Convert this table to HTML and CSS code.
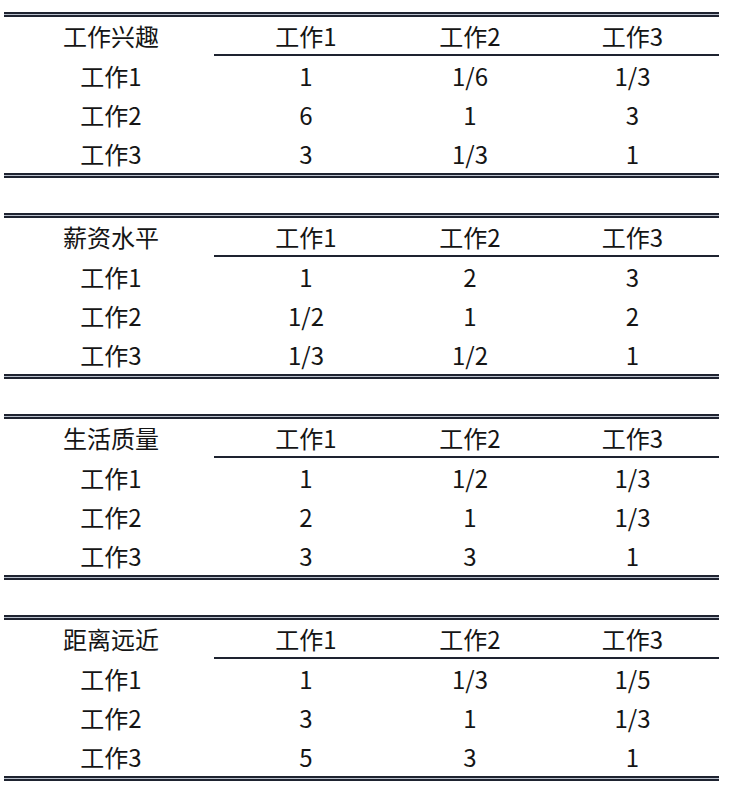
FILE: index.html
```html
<!DOCTYPE html>
<html lang="zh">
<head>
<meta charset="utf-8">
<link rel="stylesheet" href="styles.css">
</head>
<body>
<main class="page">
  <section class="tbl">
    <div class="dbl"></div>
    <div class="row head"><span>工作兴趣</span><span>工作1</span><span>工作2</span><span>工作3</span></div>
    <div class="rule"></div>
    <div class="row"><span>工作1</span><span>1</span><span>1/6</span><span>1/3</span></div>
    <div class="row"><span>工作2</span><span>6</span><span>1</span><span>3</span></div>
    <div class="row"><span>工作3</span><span>3</span><span>1/3</span><span>1</span></div>
    <div class="dbl"></div>
  </section>
  <section class="tbl">
    <div class="dbl"></div>
    <div class="row head"><span>薪资水平</span><span>工作1</span><span>工作2</span><span>工作3</span></div>
    <div class="rule"></div>
    <div class="row"><span>工作1</span><span>1</span><span>2</span><span>3</span></div>
    <div class="row"><span>工作2</span><span>1/2</span><span>1</span><span>2</span></div>
    <div class="row"><span>工作3</span><span>1/3</span><span>1/2</span><span>1</span></div>
    <div class="dbl"></div>
  </section>
  <section class="tbl">
    <div class="dbl"></div>
    <div class="row head"><span>生活质量</span><span>工作1</span><span>工作2</span><span>工作3</span></div>
    <div class="rule"></div>
    <div class="row"><span>工作1</span><span>1</span><span>1/2</span><span>1/3</span></div>
    <div class="row"><span>工作2</span><span>2</span><span>1</span><span>1/3</span></div>
    <div class="row"><span>工作3</span><span>3</span><span>3</span><span>1</span></div>
    <div class="dbl"></div>
  </section>
  <section class="tbl">
    <div class="dbl"></div>
    <div class="row head"><span>距离远近</span><span>工作1</span><span>工作2</span><span>工作3</span></div>
    <div class="rule"></div>
    <div class="row"><span>工作1</span><span>1</span><span>1/3</span><span>1/5</span></div>
    <div class="row"><span>工作2</span><span>3</span><span>1</span><span>1/3</span></div>
    <div class="row"><span>工作3</span><span>5</span><span>3</span><span>1</span></div>
    <div class="dbl"></div>
  </section>
</main>
</body>
</html>
```
FILE: styles.css
```css
html, body {
  margin: 0;
  padding: 0;
  background: #ffffff;
}
.page {
  padding: 12px 0 0 4px;
  width: 715px;
  display: flex;
  flex-direction: column;
  gap: 35px;
  font-family: "Noto Sans CJK SC", "Noto Sans", sans-serif;
  color: #151515;
  font-size: 24px;
}
.tbl {
  display: flex;
  flex-direction: column;
}
.dbl {
  height: 5px;
  box-sizing: border-box;
  border-top: 2px solid #1e2330;
  border-bottom: 2px solid #1e2330;
  background: #b9c0cc;
}
.row {
  display: grid;
  grid-template-columns: 214px 176px 152px 173px;
  height: 39px;
  align-items: center;
  line-height: 1;
}
.row.head {
  height: 37px;
}
.row span {
  text-align: center;
  padding-top: 1px;
}
.row.head span {
  padding-top: 0;
}
.rule {
  height: 2px;
  margin-left: 210px;
  background: #1e2330;
}
```
